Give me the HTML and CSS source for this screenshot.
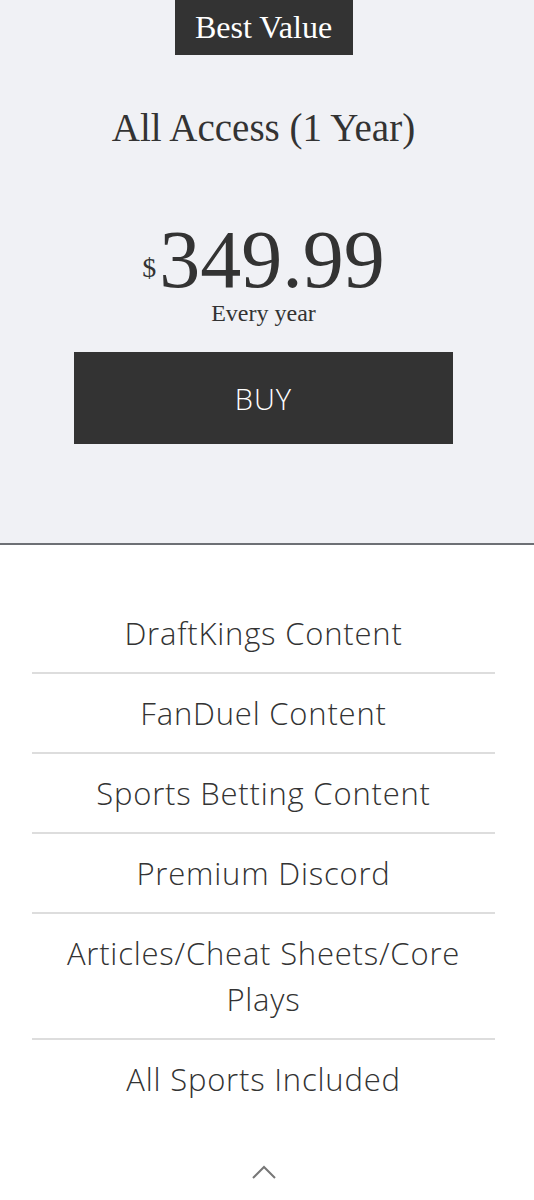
FILE: index.html
```html
<!DOCTYPE html>
<html lang="en">
<head>
  <meta charset="UTF-8">
  <title>All Access (1 Year)</title>
  <meta name="viewport" content="width=device-width, initial-scale=1.0">
  <link rel="stylesheet" href="styles.css">
</head>
<body>
  <section class="plan">
    <div class="badge">Best Value</div>
    <h2 class="plan-title">All Access (1 Year)</h2>
    <div class="price"><span class="currency">$</span>349.99</div>
    <div class="period">Every year</div>
    <button class="buy-btn">BUY</button>
  </section>
  <div class="features-wrap">
    <ul class="features">
      <li>DraftKings Content</li>
      <li>FanDuel Content</li>
      <li>Sports Betting Content</li>
      <li>Premium Discord</li>
      <li>Articles/Cheat Sheets/Core Plays</li>
      <li>All Sports Included</li>
    </ul>
    <div class="collapse">
      <svg width="26" height="16" viewBox="0 0 26 16">
        <polyline points="2,13 13,2 24,13" fill="none" stroke="#777" stroke-width="2"/>
      </svg>
    </div>
  </div>
</body>
</html>
```

FILE: styles.css
```css
html, body {
  margin: 0;
  padding: 0;
  background: #fff;
  color: #333;
  font-family: "Open Sans", Lato, sans-serif;
}
.plan {
  background: #f0f1f5;
  border-bottom: 2px solid #6d7075;
  text-align: center;
  height: 545px;
  padding-right: 7px;
  box-sizing: border-box;
  font-family: "Liberation Serif", "DejaVu Serif", serif;
}
.badge {
  display: inline-block;
  vertical-align: top;
  background: #333;
  color: #fff;
  width: 178px;
  height: 55px;
  line-height: 55px;
  font-size: 32px;
}
.plan-title {
  margin: 50px 0 0;
  font-weight: normal;
  font-size: 39px;
  line-height: 46px;
}
.price {
  margin-top: 75px;
  font-size: 82px;
  line-height: 68px;
}
.currency {
  font-size: 28px;
  vertical-align: 10px;
  margin-right: 3px;
}
.period {
  margin-top: -1px;
  font-size: 24px;
  line-height: 24px;
}
.buy-btn {
  display: block;
  margin: 27px auto 0;
  width: 379px;
  height: 92px;
  border: none;
  background: #333;
  color: #fff;
  font-family: "Open Sans", Lato, sans-serif;
  font-weight: 300;
  font-size: 29px;
  letter-spacing: 1px;
  cursor: pointer;
}
.features-wrap {
  padding-right: 7px;
}
.features {
  list-style: none;
  max-width: 463px;
  margin: 0 auto;
  padding: 49px 0 0;
  text-align: center;
}
.features li {
  padding: 16px 0;
  font-size: 31px;
  font-weight: 300;
  letter-spacing: 0.8px;
  line-height: 46px;
  border-bottom: 2px solid #ddd;
}
.features li:last-child {
  border-bottom: none;
}
.collapse {
  display: flex;
  justify-content: center;
  margin-top: 47px;
}
```
